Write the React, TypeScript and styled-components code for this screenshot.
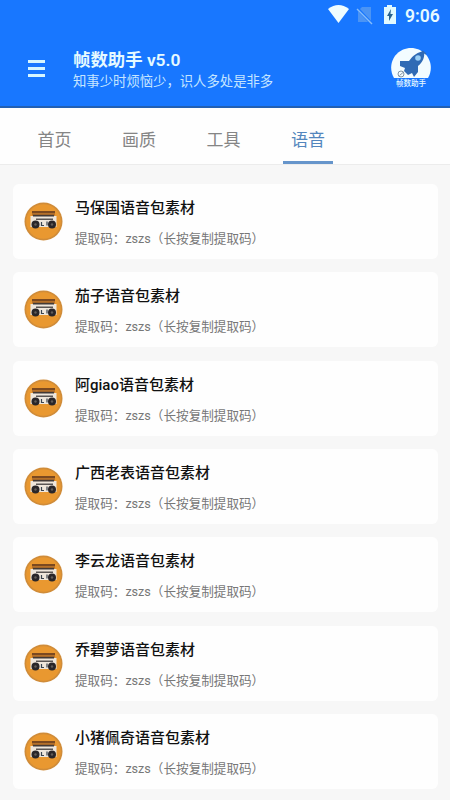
import React from "react";
import styled, { createGlobalStyle } from "styled-components";

const GlobalStyle = createGlobalStyle`
  * { box-sizing: border-box; }
  body { margin: 0; background: #f7f7f7; font-family: Roboto, "Noto Sans CJK SC", sans-serif; }
`;

const Screen = styled.div`
  width: 450px;
  height: 800px;
  overflow: hidden;
  display: flex;
  flex-direction: column;
  background: #f7f7f7;
`;

const Header = styled.header`
  flex: none;
  height: 108px;
  background: #1877ff;
  border-bottom: 2px solid #2260b4;
  color: #e6faff;
`;

const StatusBar = styled.div`
  height: 30px;
  padding: 0 9px 0 0;
  display: flex;
  justify-content: flex-end;
  align-items: center;
`;

const StatusIcons = styled.svg`
  display: block;
  width: 76px;
  height: 30px;
`;

const Clock = styled.span`
  width: 36px;
  margin-left: 2px;
  padding-top: 1px;
  font-size: 17.5px;
  line-height: 30px;
  font-weight: 600;
  white-space: nowrap;
`;

const AppBar = styled.div`
  height: 76px;
  padding: 0 17px 0 28px;
  display: flex;
  align-items: flex-start;
`;

const MenuButton = styled.button`
  width: 17px;
  height: 18px;
  margin: 30px 28px 0 0;
  padding: 0;
  border: 0;
  background: none;
  display: flex;
  flex-direction: column;
  gap: 4px;
`;

const MenuBar = styled.span`
  height: 3px;
  width: 17px;
  background: #d6f6ff;
`;

const Heading = styled.div`
  flex: 1;
  padding-top: 18px;
  white-space: nowrap;
`;

const AppTitle = styled.h1`
  margin: 0;
  font-size: 17.4px;
  line-height: 24px;
  font-weight: 600;
`;

const Motto = styled.p`
  margin: 1px 0 0;
  font-size: 13.35px;
  line-height: 18px;
  color: #c5e5ff;
`;

const Logo = styled.svg`
  display: block;
  width: 44px;
  height: 44px;
  margin-top: 17px;
`;

const Tabs = styled.nav`
  flex: none;
  height: 57px;
  padding-left: 29.4px;
  display: flex;
  gap: 34.5px;
  background: #fefefe;
  border-bottom: 1px solid #ececec;
`;

const Tab = styled.a<{ $active?: boolean }>`
  width: 50px;
  height: 56px;
  padding-top: 20px;
  text-align: center;
  font-size: 17px;
  line-height: 25px;
  color: ${(p) => (p.$active ? "#5386bd" : "#858585")};
  border-bottom: 3px solid ${(p) => (p.$active ? "#6695cb" : "transparent")};
`;

const List = styled.main`
  padding: 19px 12px 0 13px;
  display: flex;
  flex-direction: column;
  gap: 13.35px;
`;

const Card = styled.article`
  flex: none;
  height: 75px;
  padding-left: 11px;
  display: flex;
  align-items: center;
  gap: 12px;
  background: #fefefe;
  border-radius: 6px;
`;

const Radio = styled.svg`
  display: block;
  flex: none;
  width: 39px;
  height: 39px;
`;

const CardText = styled.div`
  height: 75px;
  padding-top: 13px;
  white-space: nowrap;
`;

const CardTitle = styled.h2`
  margin: 0;
  font-size: 15px;
  line-height: 22px;
  font-weight: 500;
  color: #111;
`;

const CardNote = styled.p`
  margin: 10px 0 0;
  font-size: 12.6px;
  line-height: 20px;
  color: #777;
`;

const tabs = ["首页", "画质", "工具", "语音"];
const packs = [
  "马保国语音包素材",
  "茄子语音包素材",
  "阿giao语音包素材",
  "广西老表语音包素材",
  "李云龙语音包素材",
  "乔碧萝语音包素材",
  "小猪佩奇语音包素材",
];

const RadioIcon = () => (
  <Radio viewBox="0 0 39 39">
    <circle cx="19.5" cy="19.5" r="19" fill="#d08c39" />
    <circle cx="19.5" cy="19.5" r="17.3" fill="#e99830" />
    <rect x="8" y="9" width="23" height="2.5" fill="#7b4920" />
    <rect x="8" y="11.5" width="23" height="2" fill="#b8712a" />
    <rect x="6.5" y="14" width="26" height="11" fill="#efe7dc" />
    <rect x="9" y="12.8" width="21" height="1.7" fill="#423a36" />
    <rect x="12" y="16.5" width="17" height="1.5" fill="#5a5654" />
    <circle cx="11.5" cy="22.5" r="4" fill="#292629" />
    <circle cx="28" cy="22.5" r="4" fill="#292629" />
    <circle cx="11.5" cy="22.5" r="1.2" fill="#625d59" />
    <circle cx="28" cy="22.5" r="1.2" fill="#625d59" />
    <path d="M17.5 20V23.5H20M23 19.5V23.5" fill="none" stroke="#3a4550" strokeWidth="1.2" />
  </Radio>
);

export default function App() {
  return (
    <Screen>
      <GlobalStyle />
      <Header>
        <StatusBar>
          <StatusIcons viewBox="0 0 76 30">
            <path d="M1 9Q11.5 1 22 9L11.5 23Z" fill="#eefdff" />
            <path d="M31 11L35 7H44V22H31Z" fill="#4b94f4" />
            <path d="M30 8L45 24" stroke="#1877ff" strokeWidth="3" />
            <path d="M30 9L45 24" stroke="#86bdfa" strokeWidth="1.4" />
            <path d="M57 7H60V5H65V7H69V24H57Z" fill="#e2faff" />
            <path d="M64 9L60 16H62V21L66 14H63.5Z" fill="#28638e" />
          </StatusIcons>
          <Clock>9:06</Clock>
        </StatusBar>
        <AppBar>
          <MenuButton aria-label="菜单">
            <MenuBar />
            <MenuBar />
            <MenuBar />
          </MenuButton>
          <Heading>
            <AppTitle>帧数助手 v5.0</AppTitle>
            <Motto>知事少时烦恼少，识人多处是非多</Motto>
          </Heading>
          <Logo viewBox="0 0 44 44">
            <path d="M5 31C-3 17 7 1 22 1S47 17 39 31Z" fill="#f3fcff" />
            <path d="M35 4C29 5 24 8 20 14L11 14L11 19L16 21L15 24L19 28L23 26L25 30L29 25V19C34 15 36 10 35 4Z" fill="#306bb5" />
            <circle cx="29" cy="11" r="2.8" fill="#9acff5" />
            <path d="M33 4L37 7" stroke="#306bb5" strokeWidth="1.5" />
            <circle cx="12" cy="27" r="3" fill="#f3fcff" stroke="#65798b" strokeWidth=".8" />
            <path d="M10.5 28.5L14 25.5" stroke="#65798b" strokeWidth=".8" />
            <text x="22" y="39" textAnchor="middle" fontSize="7.5" fontWeight="500" fill="#e8faff">帧数助手</text>
          </Logo>
        </AppBar>
      </Header>
      <Tabs>
        {tabs.map((name) => (
          <Tab key={name} $active={name === "语音"}>{name}</Tab>
        ))}
      </Tabs>
      <List>
        {packs.map((name) => (
          <Card key={name}>
            <RadioIcon />
            <CardText>
              <CardTitle>{name}</CardTitle>
              <CardNote>提取码：zszs（长按复制提取码）</CardNote>
            </CardText>
          </Card>
        ))}
      </List>
    </Screen>
  );
}
